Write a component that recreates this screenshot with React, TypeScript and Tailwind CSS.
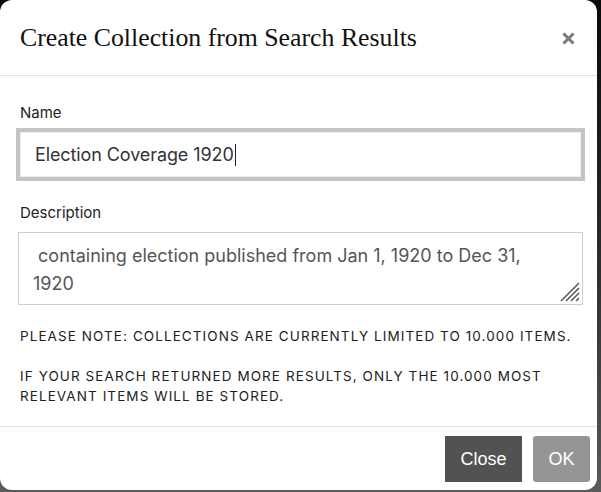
import React from "react";

export default function App() {
  return (
    <div className="w-[601px] h-[492px] bg-gradient-to-b from-[#0a0a0a] via-[#2a2a2a] to-[#5a5a5a] overflow-hidden">
      <div className="w-[597px] h-[490px] bg-white rounded-[12px] flex flex-col overflow-hidden">
        {/* Header */}
        <div className="h-[76px] border-b border-[#e3e3e3] flex items-center justify-between pl-[20px] pr-[22px] shrink-0">
          <h1 className="text-[25.8px] text-[#111] pt-[2px]" style={{ fontFamily: "'Liberation Serif', serif" }}>
            Create Collection from Search Results
          </h1>
          <svg width="13" height="13" viewBox="0 0 13 13" className="mt-[1px]">
            <path d="M1.5 1.5 L11.5 11.5 M11.5 1.5 L1.5 11.5" stroke="#7a7a7a" strokeWidth="3" strokeLinecap="butt" />
          </svg>
        </div>

        {/* Body */}
        <div className="flex-1 pl-[16px] pr-[12px] pt-[27px]" style={{ fontFamily: "Inter, 'Noto Sans', sans-serif" }}>
          <label className="block pl-[4px] text-[15px] leading-[20px] text-[#222]">Name</label>
          <div className="mt-[5px] h-[53px] border-[4px] border-[#c4c4c4]">
            <div className="h-full w-full border border-[#eeeeee] flex items-center pl-[14px]">
              <span className="text-[18px] text-[#333] tracking-[-0.1px]">Election Coverage 1920</span>
              <span className="w-[1px] h-[22px] bg-[#222] ml-[1px]"></span>
            </div>
          </div>

          <label className="block pl-[4px] mt-[22px] text-[15px] leading-[20px] text-[#222]">Description</label>
          <div className="relative mt-[9px] mx-[2px] h-[73px] border border-[#cfcfcf] pl-[14px] pr-[30px] pt-[9px] text-[18px] leading-[28px] text-[#555]">
            <div className="whitespace-nowrap">&nbsp;containing election published from Jan 1, 1920 to Dec 31,</div>
            <div>1920</div>
            <svg className="absolute right-[2px] bottom-[2px]" width="20" height="20" viewBox="0 0 20 20">
              <path d="M19 1 L1 19 M19 6 L6 19 M19 11 L11 19 M19 16 L16 19" stroke="#5a5a5a" strokeWidth="1.6" />
            </svg>
          </div>

          <div className="pl-[4px] mt-[21px] text-[13.5px] leading-[20px] tracking-[0.08em] uppercase text-[#222]">
            <p className="whitespace-nowrap">Please note: Collections are currently limited to 10.000 items.</p>
            <p className="mt-[20px] pr-[40px]">If your search returned more results, only the 10.000 most relevant items will be stored.</p>
          </div>
        </div>

        {/* Footer */}
        <div className="h-[64px] border-t border-[#e3e3e3] flex items-start justify-end gap-[11px] pt-[9px] pr-[7px] shrink-0" style={{ fontFamily: "'Liberation Sans', Arial, sans-serif" }}>
          <button className="w-[77px] h-[46px] bg-[#525252] text-white text-[18px]">Close</button>
          <button className="w-[57px] h-[46px] bg-[#959595] text-white text-[18px] rounded-[3px]">OK</button>
        </div>
      </div>
    </div>
  );
}
